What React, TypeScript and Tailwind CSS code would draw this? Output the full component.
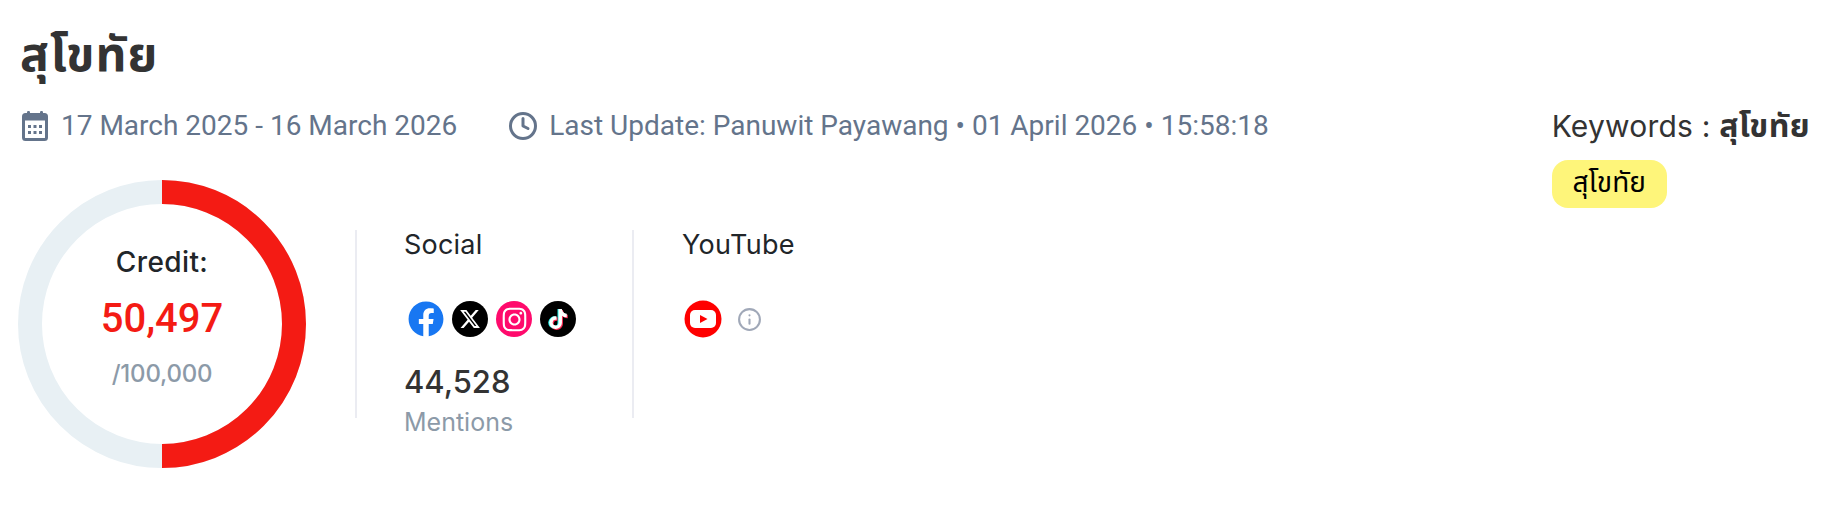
import React from "react";
import { Clock, Info } from "lucide-react";
import { FaFacebook, FaInstagram, FaTiktok } from "react-icons/fa";
import { FaXTwitter } from "react-icons/fa6";

const thai = '"Noto Sans Thai", "Noto Sans", "DejaVu Sans", sans-serif';

function CalendarIcon() {
  return (
    <svg width="26" height="30" viewBox="0 0 26 30" className="shrink-0">
      <rect x="5" y="0" width="3" height="6" rx="1.2" fill="#64748b" />
      <rect x="18" y="0" width="3" height="6" rx="1.2" fill="#64748b" />
      <rect x="1.5" y="3.5" width="23" height="25" rx="2" fill="none" stroke="#64748b" strokeWidth="3" />
      <rect x="1.5" y="3.5" width="23" height="6" fill="#64748b" />
      {[6, 11.5, 17].map((x) =>
        [14, 20].map((y) => <rect key={x + "-" + y} x={x} y={y} width="3" height="3" fill="#64748b" />)
      )}
    </svg>
  );
}

function Donut() {
  return (
    <div className="relative w-[288px] h-[288px] shrink-0">
      <svg width="288" height="288" viewBox="0 0 288 288">
        <circle cx="144" cy="144" r="132" fill="none" stroke="#e8f0f4" strokeWidth="24" />
        <path d="M144 12 A132 132 0 0 1 144 276" fill="none" stroke="#f41b14" strokeWidth="24" />
      </svg>
      <div className="absolute inset-0 flex flex-col items-center font-['Inter',sans-serif]">
        <div className="mt-[66px] text-[28px] leading-[32px] font-medium text-[#212529] tracking-[0.4px]">Credit:</div>
        <div className="mt-[18px] text-[40px] leading-[46px] font-medium text-[#f41b14] font-['Roboto',sans-serif]">50,497</div>
        <div className="mt-[16px] text-[24px] leading-[32px] font-medium text-[#8c9aa8] tracking-[-0.2px]">/100,000</div>
      </div>
    </div>
  );
}

function Tiktok() {
  return (
    <span className="relative flex items-center justify-center w-[36px] h-[36px] rounded-full bg-black">
      <FaTiktok size={20} color="#25f4ee" className="absolute left-[7px] top-[8px]" />
      <FaTiktok size={20} color="#fe2c55" className="absolute left-[9px] top-[9px]" />
      <FaTiktok size={20} color="#ffffff" className="absolute left-[8px] top-[8px]" />
    </span>
  );
}

function Youtube() {
  return (
    <svg width="38" height="38" viewBox="0 0 38 38">
      <circle cx="19" cy="19" r="18.5" fill="#ff0000" />
      <rect x="6" y="10" width="26" height="18" rx="5" fill="#ffffff" />
      <path d="M16 15 L23.5 19 L16 23 Z" fill="#ff0000" />
    </svg>
  );
}

export default function App() {
  return (
    <div className="w-[1844px] h-[516px] bg-white flex justify-between pl-[18px] pr-[34px] pt-[22px] overflow-hidden font-['Roboto',sans-serif]">
      <div className="flex flex-col">
        <h1 className="text-[48px] leading-[70px] font-bold text-[#333333] pl-[2px] tracking-[1px]" style={{ fontFamily: thai }}>สุโขทัย</h1>
        <div className="flex items-center mt-[16px] pl-[4px] text-[28px] leading-[36px] text-[#64748b]">
          <CalendarIcon />
          <span className="ml-[13px]">17 March 2025 - 16 March 2026</span>
          <Clock size={30} strokeWidth={2.4} color="#64748b" className="ml-[51px]" />
          <span className="ml-[11px]">Last Update: Panuwit Payawang • 01 April 2026 • 15:58:18</span>
        </div>
        <div className="flex items-start mt-[36px]">
          <Donut />
          <div className="flex mt-[50px] h-[188px]">
            <div className="ml-[49px] w-[2px] bg-[#ebecf2]" />
            <div className="ml-[47px] w-[228px] font-['Inter',sans-serif] flex flex-col">
              <div className="text-[27px] leading-[32px] text-[#212529] mt-[-1px] tracking-[0.2px]">Social</div>
              <div className="flex items-center gap-[8px] mt-[40px] pl-[4px]">
                <span className="w-[36px] h-[36px] flex items-center justify-center">
                  <FaFacebook size={36} color="#1877f2" />
                </span>
                <span className="flex items-center justify-center w-[36px] h-[36px] rounded-full bg-black">
                  <FaXTwitter size={22} color="#ffffff" />
                </span>
                <span className="flex items-center justify-center w-[36px] h-[36px] rounded-full bg-[#ff0a6c]">
                  <FaInstagram size={27} color="#ffffff" />
                </span>
                <Tiktok />
              </div>
              <div className="text-[31px] leading-[44px] font-medium text-[#333333] mt-[23px]">44,528</div>
              <div className="text-[25px] leading-[32px] text-[#8c9aa8] mt-[2px]">Mentions</div>
            </div>
            <div className="w-[2px] bg-[#ebecf2]" />
            <div className="ml-[48px] font-['Inter',sans-serif]">
              <div className="text-[27px] leading-[32px] text-[#212529] mt-[-1px] tracking-[0.3px]">YouTube</div>
              <div className="flex items-center mt-[39px] pl-[2px]">
                <Youtube />
                <Info size={25} strokeWidth={2} color="#a0a8b8" className="ml-[15px]" />
              </div>
            </div>
          </div>
        </div>
      </div>
      <div className="flex flex-col items-start pt-[84px]">
        <div className="text-[30px] leading-[40px] text-[#333333] font-['Inter',sans-serif] tracking-[0.2px]">
          Keywords : <span className="font-bold text-[32px] tracking-[0.4px]" style={{ fontFamily: thai }}>สุโขทัย</span>
        </div>
        <div className="mt-[13px] h-[48px] w-[115px] flex items-center justify-center rounded-[16px] bg-[#fef57a] text-[28px] text-black" style={{ fontFamily: thai }}>สุโขทัย</div>
      </div>
    </div>
  );
}
